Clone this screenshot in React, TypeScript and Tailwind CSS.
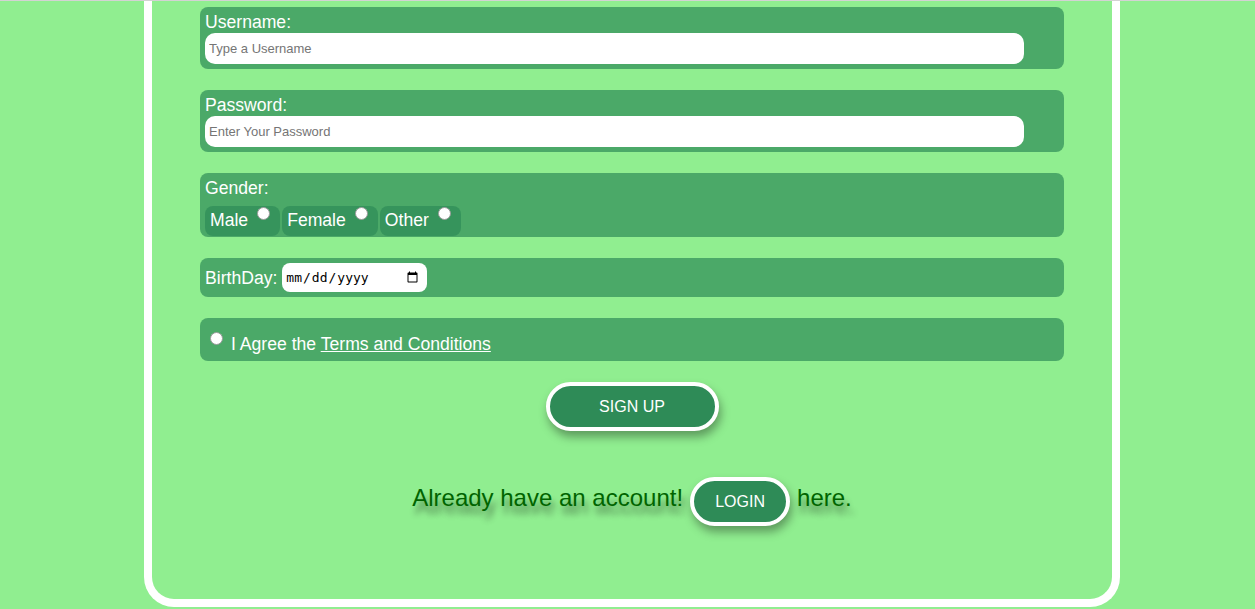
import React from 'react'

const box = 'mx-[48px] rounded-[8px] bg-[#2e8b57]/70 text-white'
const radio =
  'appearance-none w-[13px] h-[13px] rounded-full bg-white border border-[#9a9a9a] shrink-0'

function Chip({ label }: { label: string }) {
  return (
    <label className="flex items-start rounded-[8px] bg-[#2e8b57]/70 pl-[5px] pr-[10px] h-[30px]">
      <span className="mt-[4px] leading-[20px]">{label}</span>
      <input type="radio" name="gender" className={`${radio} ml-[9px] mt-[1px]`} />
    </label>
  )
}

export default function App() {
  return (
    <div className="min-h-screen bg-[#90ee90] border-t border-[#d3d3d3] font-['Liberation_Sans',Arial,sans-serif] text-[17.6px]">
      <div className="ml-[144px] w-[976px] border-8 border-t-0 border-white rounded-b-[30px] pt-[6px] pb-[73px]">
        <div className={`${box} p-[5px]`}>
          <div className="leading-[21px]">Username:</div>
          <input
            type="text"
            placeholder="Type a Username"
            className="block w-[819px] h-[31px] rounded-[10px] bg-white px-[4px] text-[13px] text-black placeholder:text-[#757575] outline-none"
          />
        </div>

        <div className={`${box} p-[5px] mt-[21px]`}>
          <div className="leading-[21px]">Password:</div>
          <input
            type="password"
            placeholder="Enter Your Password"
            className="block w-[819px] h-[31px] rounded-[10px] bg-white px-[4px] text-[13px] text-black placeholder:text-[#757575] outline-none"
          />
        </div>

        <div className={`${box} px-[5px] pt-[5px] pb-[1px] mt-[21px]`}>
          <div className="leading-[21px]">Gender:</div>
          <div className="flex gap-[2px] mt-[7px]">
            <Chip label="Male" />
            <Chip label="Female" />
            <Chip label="Other" />
          </div>
        </div>

        <div className={`${box} p-[5px] mt-[21px] flex items-center`}>
          <span className="leading-[20px] mt-[1px]">BirthDay:</span>
          <input
            type="date"
            className="ml-[5px] w-[145px] h-[29px] rounded-[8px] bg-white pl-[3px] pr-[6px] text-[13px] text-black font-['DejaVu_Sans_Mono',monospace] outline-none"
          />
        </div>

        <div className={`${box} pl-[10px] pt-[14px] pb-[7px] mt-[21px] flex items-start`}>
          <input type="radio" className={radio} />
          <span className="ml-[8px] mt-[2px] leading-[20px]">
            I Agree the{' '}
            <a href="#" className="underline">
              Terms and Conditions
            </a>
          </span>
        </div>

        <div className="flex justify-center mt-[21px]">
          <button className="w-[173px] h-[49px] rounded-full border-4 border-white bg-[#2e8b57] text-white text-[16px] shadow-[2px_6px_10px_rgba(0,0,0,0.35)]">
            SIGN UP
          </button>
        </div>

        <div className="flex justify-center items-center mt-[46px] text-[24px] text-[#006400] [text-shadow:3px_8px_6px_rgba(0,0,0,0.45)]">
          <span className="mb-[7px]">Already have an account!</span>
          <button className="mx-[7px] w-[100px] h-[49px] rounded-full border-4 border-white bg-[#2e8b57] text-white text-[16px] [text-shadow:none] shadow-[2px_6px_10px_rgba(0,0,0,0.35)]">
            LOGIN
          </button>
          <span className="mb-[7px]">here.</span>
        </div>
      </div>
    </div>
  )
}
